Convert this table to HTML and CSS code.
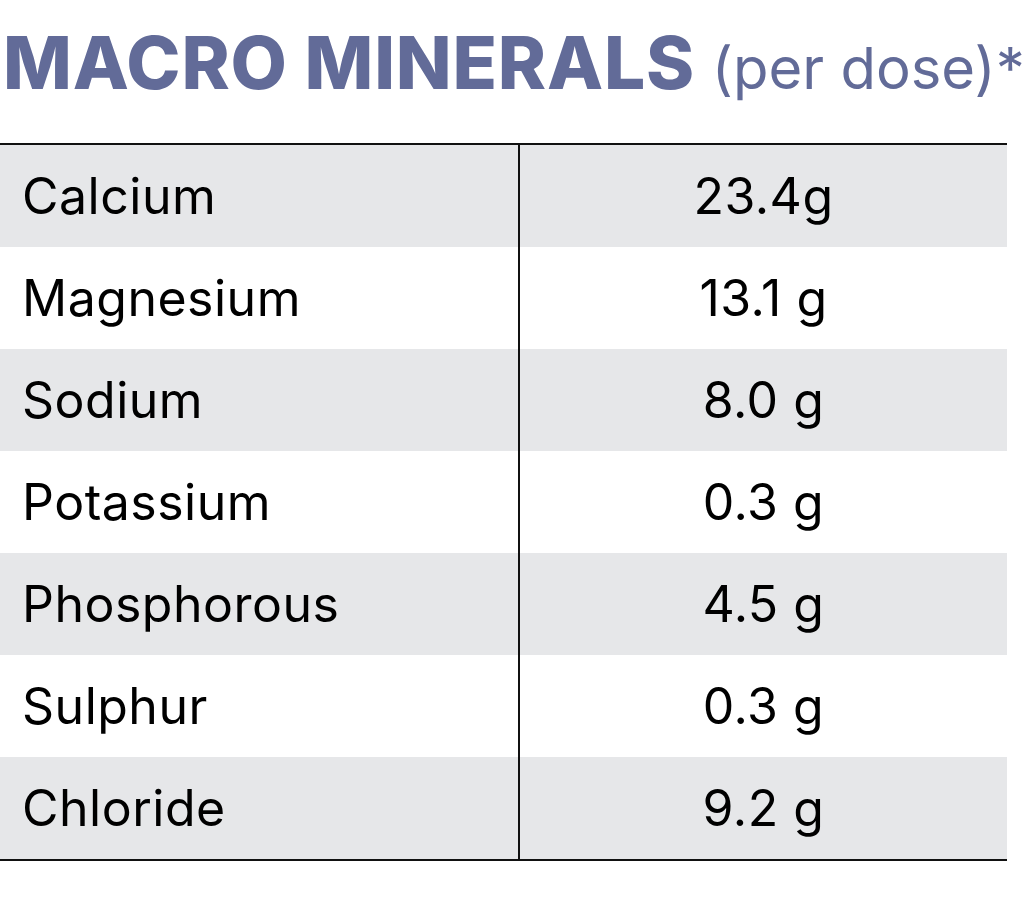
FILE: index.html
```html
<!DOCTYPE html>
<html lang="en">
<head>
    <meta charset="UTF-8">
    <meta name="viewport" content="width=device-width, initial-scale=1.0">
    <title>Macro Minerals</title>
    <link rel="stylesheet" href="styles.css">
</head>
<body>
    <h1 class="title">MACRO MINERALS <span class="sub">(per dose)*</span></h1>
    <table class="minerals">
        <tr><td>Calcium</td><td>23.4g</td></tr>
        <tr><td>Magnesium</td><td>13.1 g</td></tr>
        <tr><td>Sodium</td><td>8.0 g</td></tr>
        <tr><td>Potassium</td><td>0.3 g</td></tr>
        <tr><td>Phosphorous</td><td>4.5 g</td></tr>
        <tr><td>Sulphur</td><td>0.3 g</td></tr>
        <tr><td>Chloride</td><td>9.2 g</td></tr>
    </table>
</body>
</html>
```

FILE: styles.css
```css
body {
    margin: 0;
    background: #fff;
    font-family: Inter, "Noto Sans", sans-serif;
}
.title {
    margin: 0;
    padding: 23px 0 0 3px;
    height: 120px;
    box-sizing: border-box;
    color: #626b98;
    font-size: 73px;
    font-weight: 800;
    line-height: 80px;
    letter-spacing: 0.8px;
    white-space: nowrap;
}
.title .sub {
    font-weight: 400;
    font-size: 58px;
    letter-spacing: 0;
}
.minerals {
    width: 1007px;
    margin-top: 23px;
    border-collapse: collapse;
    border-top: 2px solid #111;
    border-bottom: 2px solid #111;
}
.minerals td {
    height: 102px;
    padding: 0;
    font-size: 50px;
    letter-spacing: 0.5px;
    color: #000;
}
.minerals tr:nth-child(odd) td {
    background: #e6e7e9;
}
.minerals td:first-child {
    width: 519px;
    padding-left: 22px;
    box-sizing: border-box;
    border-right: 2px solid #111;
}
.minerals td:last-child {
    text-align: center;
}
```
